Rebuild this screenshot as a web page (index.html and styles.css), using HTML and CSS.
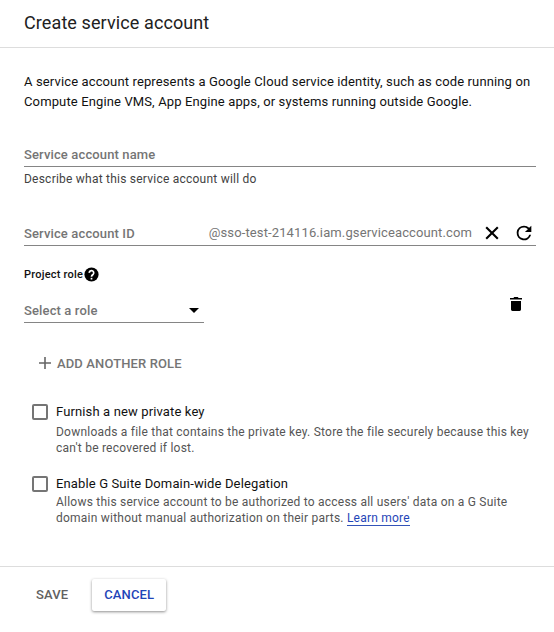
FILE: index.html
```html
<!DOCTYPE html>
<html lang="en">
<head>
<meta charset="utf-8">
<title>Create service account</title>
<link rel="stylesheet" href="styles.css">
</head>
<body>
<main class="dialog">
  <header class="header"><h1 class="title">Create service account</h1></header>
  <section class="content">
    <p class="intro">A service account represents a Google Cloud service identity, such as code running on<br>Compute Engine VMS, App Engine apps, or systems running outside Google.</p>
    <div class="field field-name"><span class="label">Service account name</span></div>
    <p class="hint">Describe what this service account will do</p>
    <div class="field field-id">
      <span class="label">Service account ID</span>
      <span class="suffix">@sso-test-214116.iam.gserviceaccount.com</span>
      <svg class="icon-clear" width="14" height="14" viewBox="0 0 14 14"><path d="M1.2 1.2 12.8 12.8M12.8 1.2 1.2 12.8" fill="none" stroke="#000" stroke-width="2.1"/></svg>
      <svg class="icon-refresh" width="22" height="22" viewBox="0 0 24 24"><path d="M17.65 6.35A7.96 7.96 0 0 0 12 4a8 8 0 1 0 7.73 10h-2.08A6 6 0 1 1 12 6c1.66 0 3.14.69 4.22 1.78L13 11h7V4z"/></svg>
    </div>
    <div class="role-heading"><span>Project role</span>
      <svg width="17" height="17" viewBox="0 0 24 24"><circle cx="12" cy="12" r="10"/><path d="M8.900 9.700a3.100 3.100 0 1 1 5.400 2c-1.100 1.100-2.300 1.600-2.300 3.400" fill="none" stroke="#fff" stroke-width="2.400"/><path d="M10.800 16.700h2.400v2.400h-2.400z" fill="#fff"/></svg>
    </div>
    <div class="role-row">
      <div class="select"><span class="label">Select a role</span><svg width="10" height="5" viewBox="0 0 10 5"><path d="M0 0h10L5 5z"/></svg></div>
      <svg class="icon-trash" width="12" height="14" viewBox="0 0 12 14"><path d="M0 1h3.400l.8-1h3.600l.8 1H12v1.600H0zM1 4h10v8.600Q11 14 9.600 14H2.400Q1 14 1 12.600z"/></svg>
    </div>
    <div class="add"><svg width="12" height="12" viewBox="0 0 12 12"><path d="M6 0v12M0 6h12" fill="none" stroke="#666" stroke-width="1.600"/></svg><span>ADD ANOTHER ROLE</span></div>
    <div class="option option-key">
      <span class="box"></span>
      <div><div class="option-title">Furnish a new private key</div>
      <p class="desc">Downloads a file that contains the private key. Store the file securely because this key<br>can't be recovered if lost.</p></div>
    </div>
    <div class="option option-delegation">
      <span class="box"></span>
      <div><div class="option-title">Enable G Suite Domain-wide Delegation</div>
      <p class="desc">Allows this service account to be authorized to access all users' data on a G Suite<br>domain without manual authorization on their parts. <a class="link">Learn more</a></p></div>
    </div>
  </section>
  <footer class="footer"><span class="save">SAVE</span><span class="cancel">CANCEL</span></footer>
</main>
</body>
</html>
```
FILE: styles.css
```css
* { box-sizing: border-box; }
body { margin: 0; background: #fff; color: #111; font-family: Roboto, "Liberation Sans", sans-serif; font-size: 13px; }
h1, p { margin: 0; font-weight: 400; }
svg { display: block; flex: none; }
span, p, h1, .option-title { white-space: nowrap; }
.dialog { width: 554px; height: 632px; display: flex; flex-direction: column; overflow: hidden; }
.header { height: 48px; flex: none; padding: 11px 24px 0; border-bottom: 1px solid #ddd; }
.title { font-size: 18px; line-height: 24px; letter-spacing: .1px; color: #212121; }
.content { height: 518px; flex: none; padding: 24px 18px 0 24px; }
.intro { line-height: 20px; letter-spacing: .13px; color: #111; }
.field { width: 512px; display: flex; align-items: center; border-bottom: 1px solid #858585; }
.label { font-weight: 500; color: #757575; letter-spacing: .13px; }
.field-name { height: 24px; margin-top: 31px; }
.hint { margin-top: 4px; font-size: 12px; line-height: 16px; letter-spacing: .23px; color: #424242; }
.field-id { height: 24px; margin-top: 35px; }
.suffix { margin: 0 0 2px auto; color: #757575; letter-spacing: .12px; }
.icon-clear { margin: 0 0 2px 13px; }
.icon-refresh { margin: 0 1px 2px 14px; }
.role-heading { display: flex; align-items: center; height: 18px; margin-top: 19px; font-size: 11px; font-weight: 500; letter-spacing: .22px; }
.role-row { display: flex; justify-content: space-between; padding-right: 14px; margin-top: 15px; }
.select { width: 180px; height: 25px; display: flex; align-items: center; justify-content: space-between; padding-right: 5px; border-bottom: 1px solid #858585; }
.icon-trash { margin-top: -1px; }
.add { height: 20px; margin-top: 30px; padding-left: 15px; display: flex; align-items: center; gap: 6px; font-weight: 500; color: #757575; letter-spacing: .12px; }
.option { display: flex; gap: 8px; padding-left: 8px; }
.option-key { margin-top: 31px; }
.option-delegation { margin-top: 20px; }
.box { width: 16px; height: 16px; flex: none; border: 2px solid #757575; border-radius: 2px; }
.option-title { line-height: 16px; letter-spacing: .13px; color: #111; }
.option-key .option-title { height: 20px; }
.option-delegation .option-title { height: 18px; }
.desc { font-size: 12px; line-height: 16px; letter-spacing: .225px; color: #555; }
.link { color: #1f45b8; border-bottom: 1px solid #3353b8; }
.footer { height: 66px; flex: none; display: flex; align-items: flex-start; gap: 24px; padding: 12px 36px 0; border-top: 1px solid #ddd; font-weight: 500; line-height: 32px; letter-spacing: .13px; }
.save { color: #616161; }
.cancel { width: 74px; height: 32px; text-align: center; color: #1f45b8; border-radius: 2px; box-shadow: 0 1px 3px rgba(0,0,0,.45); }
```
